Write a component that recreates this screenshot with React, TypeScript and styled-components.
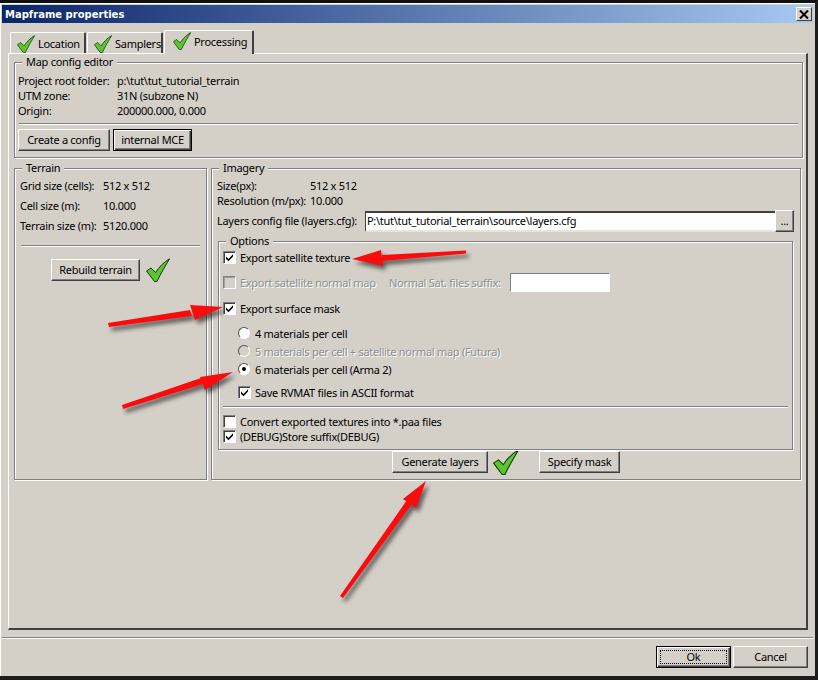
import React, { FC } from 'react';
import styled, { createGlobalStyle } from 'styled-components';

const GlobalStyle = createGlobalStyle`
  * { box-sizing: border-box; }
  html, body { margin: 0; padding: 0; background: #d4d0c8; }
  body {
    font-family: "Noto Sans", "DejaVu Sans", sans-serif;
    font-size: 11px;
    letter-spacing: -0.28px;
    color: #000;
  }
`

const GreenCheck: FC<{ size: number }> = ({ size }) => (
    <svg width={size} height={size} viewBox="0 0 24 24">
        <path d="M0.5 13 L5 10 L9.5 14.5 C13 9 18 4 23.5 0.8 C20 7 15 15 11 23.5 L8.5 23.5 Z"
              fill="#5cc52e" stroke="#0d3a0a" strokeWidth="1" strokeLinejoin="round" />
    </svg>
)

const Tick: FC = () => (
    <svg width="9" height="9" viewBox="0 0 9 9">
        <path d="M1 3.5 L3.5 6 L8 1.2 L8 3.6 L3.5 8.2 L1 5.8 Z" fill="#000" />
    </svg>
)

const Arrows: FC = () => (
    <ArrowLayer width="818" height="680" viewBox="0 0 818 680">
        <polygon points="466,250.5 466,253.5 382,261 382,255" />
        <polygon points="352,259 381,250 383,266" />
        <polygon points="108,323 109,327 192,316 190,310" />
        <polygon points="223,307 190,305 195,320" />
        <polygon points="122,405 123,409 203,384 201,378" />
        <polygon points="233,372 200,377 205,390" />
        <polygon points="340,596 343,598 412,504 407,500" />
        <polygon points="426,481 403,499 416,508" />
    </ArrowLayer>
)

const App: FC = () => {
    return (
        <Window>
            <GlobalStyle />
            <TitleBar>
                <TitleText>Mapframe properties</TitleText>
                <CloseButton>
                    <svg width="10" height="9" viewBox="0 0 10 9">
                        <path d="M1 0.5 L9 8.5 M9 0.5 L1 8.5" stroke="#000" strokeWidth="2" />
                    </svg>
                </CloseButton>
            </TitleBar>
            <Body>
                <TabRow>
                    <Tab $width={76}><GreenCheck size={18} /><span>Location</span></Tab>
                    <Tab $width={76}><GreenCheck size={18} /><span>Samplers</span></Tab>
                    <Tab $width={90} $active><GreenCheck size={18} /><span>Processing</span></Tab>
                </TabRow>
                <TabPanel>
                    <MapGroup>
                        <Legend>Map config editor</Legend>
                        <InfoRow $height={15} $pad={4}>
                            <Label $width={99}>Project root folder:</Label><span>p:\tut\tut_tutorial_terrain</span>
                        </InfoRow>
                        <InfoRow $height={15} $pad={4}>
                            <Label $width={99}>UTM zone:</Label><span>31N (subzone N)</span>
                        </InfoRow>
                        <InfoRow $height={15} $pad={4}>
                            <Label $width={99}>Origin:</Label><span>200000.000, 0.000</span>
                        </InfoRow>
                        <Separator $top={5} $side={4} />
                        <ButtonRow $top={4} $left={4}>
                            <Button $width={92}>Create a config</Button>
                            <Button $width={79} $default>internal MCE</Button>
                        </ButtonRow>
                    </MapGroup>
                    <Columns>
                        <TerrainGroup>
                            <Legend>Terrain</Legend>
                            <InfoRow $height={20} $pad={6}>
                                <Label $width={83}>Grid size (cells):</Label><span>512 x 512</span>
                            </InfoRow>
                            <InfoRow $height={20} $pad={6}>
                                <Label $width={83}>Cell size (m):</Label><span>10.000</span>
                            </InfoRow>
                            <InfoRow $height={20} $pad={6}>
                                <Label $width={83}>Terrain size (m):</Label><span>5120.000</span>
                            </InfoRow>
                            <Separator $top={10} $side={6} />
                            <ButtonRow $top={11} $left={37}>
                                <Button $width={89}>Rebuild terrain</Button>
                                <CheckSlot $left={3}><GreenCheck size={24} /></CheckSlot>
                            </ButtonRow>
                        </TerrainGroup>
                        <ImageryGroup>
                            <Legend>Imagery</Legend>
                            <InfoRow $height={15} $pad={6}>
                                <Label $width={93}>Size(px):</Label><span>512 x 512</span>
                            </InfoRow>
                            <InfoRow $height={15} $pad={6}>
                                <Label $width={93}>Resolution (m/px):</Label><span>10.000</span>
                            </InfoRow>
                            <LayersRow>
                                <LayersLabel $width={148}>Layers config file (layers.cfg):</LayersLabel>
                                <PathInput>P:\tut\tut_tutorial_terrain\source\layers.cfg</PathInput>
                                <Button $width={19}>...</Button>
                            </LayersRow>
                            <OptionsGroup>
                                <Legend>Options</Legend>
                                <OptionRow $top={0}>
                                    <CheckBox><Tick /></CheckBox>
                                    <span>Export satellite texture</span>
                                </OptionRow>
                                <OptionRow $top={9}>
                                    <CheckBox $disabled />
                                    <NormalLabel>Export satellite normal map</NormalLabel>
                                    <SuffixLabel>Normal Sat. files suffix:</SuffixLabel>
                                    <SuffixInput />
                                </OptionRow>
                                <OptionRow $top={10}>
                                    <CheckBox><Tick /></CheckBox>
                                    <span>Export surface mask</span>
                                </OptionRow>
                                <OptionRow $top={9} $indent={15}>
                                    <Radio />
                                    <span>4 materials per cell</span>
                                </OptionRow>
                                <OptionRow $top={2} $indent={15}>
                                    <Radio $disabled />
                                    <Dimmed>5 materials per cell + satellite normal map (Futura)</Dimmed>
                                </OptionRow>
                                <OptionRow $top={2} $indent={15}>
                                    <Radio $checked />
                                    <span>6 materials per cell (Arma 2)</span>
                                </OptionRow>
                                <OptionRow $top={7} $indent={15}>
                                    <CheckBox><Tick /></CheckBox>
                                    <span>Save RVMAT files in ASCII format</span>
                                </OptionRow>
                                <Separator $top={6} $side={4} />
                                <OptionRow $top={6} $height={15}>
                                    <CheckBox />
                                    <span>Convert exported textures into *.paa files</span>
                                </OptionRow>
                                <OptionRow $top={0} $height={15}>
                                    <CheckBox><Tick /></CheckBox>
                                    <span>(DEBUG)Store suffix(DEBUG)</span>
                                </OptionRow>
                            </OptionsGroup>
                            <ButtonRow $top={-1} $left={181}>
                                <Button $width={96}>Generate layers</Button>
                                <CheckSlot $left={2}><GreenCheck size={26} /></CheckSlot>
                                <CheckSlot $left={17}><Button $width={81}>Specify mask</Button></CheckSlot>
                            </ButtonRow>
                        </ImageryGroup>
                    </Columns>
                </TabPanel>
                <FooterLine />
                <Footer>
                    <Button $width={75} $default $focus>Ok</Button>
                    <Button $width={75}>Cancel</Button>
                </Footer>
            </Body>
            <Arrows />
        </Window>
    )
};

export default App;

let Window = styled.div`
  position: relative;
  width: 818px;
  height: 680px;
  background: #d4d0c8;
  border-top: 3px solid #101010;
  border-right: 3px solid #1c1c1c;
  border-bottom: 4px solid #1c1c1c;
  padding: 2px 2px 0 2px;
  box-shadow: inset 1px 1px 0 #fff;
  overflow: hidden;
`

let TitleBar = styled.div`
  display: flex;
  align-items: center;
  justify-content: space-between;
  height: 18px;
  padding: 0 1px 0 3px;
  background: linear-gradient(to right, #0a246a, #a6caf0);
`

let TitleText = styled.div`
  color: #fff;
  font-family: "DejaVu Sans", sans-serif;
  font-weight: bold;
  font-size: 10px;
  letter-spacing: 0;
`

let CloseButton = styled.div`
  display: flex;
  align-items: center;
  justify-content: center;
  width: 16px;
  height: 14px;
  background: #d4d0c8;
  border: 1px solid;
  border-color: #fff #404040 #404040 #fff;
`

let Body = styled.div`
  display: flex;
  flex-direction: column;
  padding: 7px 5px 0 6px;
`

let TabRow = styled.div`
  display: flex;
  align-items: flex-end;
  gap: 1px;
  height: 23px;
  padding-left: 2px;
`

let Tab = styled.div<{ $width: number; $active?: boolean }>`
  position: relative;
  z-index: ${p => (p.$active ? 2 : 1)};
  display: flex;
  align-items: center;
  gap: 3px;
  width: ${p => p.$width}px;
  height: ${p => (p.$active ? 24 : 21)}px;
  margin-bottom: ${p => (p.$active ? -1 : 0)}px;
  padding: 1px 0 ${p => (p.$active ? 4 : 0)}px ${p => (p.$active ? 8 : 6)}px;
  background: #d4d0c8;
  border: 1px solid #fff;
  border-bottom: none;
  border-right: 2px solid #404040;
  border-radius: 2px 2px 0 0;
`

let TabPanel = styled.div`
  display: flex;
  flex-direction: column;
  gap: 10px;
  height: 577px;
  padding: 8px 3px 0 5px;
  border: 1px solid;
  border-color: #fff #404040 #404040 #fff;
  border-width: 1px 2px 2px 1px;
`

let Group = styled.div`
  position: relative;
  border: 1px solid #808080;
  box-shadow: inset 1px 1px 0 #fff, 1px 1px 0 #fff;
`

let MapGroup = styled(Group)`
  height: 96px;
  padding-top: 10px;
`

let Columns = styled.div`
  display: grid;
  grid-template-columns: 193px 590px;
  gap: 4px;
  height: 312px;
`

let TerrainGroup = styled(Group)`
  padding-top: 6px;
`

let ImageryGroup = styled(Group)`
  padding-top: 9px;
`

let OptionsGroup = styled(Group)`
  height: 209px;
  margin: 9px 7px 0 6px;
  padding: 7px 0 0 0;
`

let Legend = styled.div`
  position: absolute;
  top: -8px;
  left: 7px;
  padding: 0 4px;
  background: #d4d0c8;
  line-height: 13px;
`

let InfoRow = styled.div<{ $height: number; $pad: number }>`
  display: flex;
  align-items: center;
  height: ${p => p.$height}px;
  padding-left: ${p => p.$pad - 1}px;
  white-space: nowrap;
`

let Label = styled.div<{ $width: number }>`
  flex: none;
  width: ${p => p.$width}px;
`

let LayersLabel = styled(Label)`
  padding-bottom: 2px;
`

let Separator = styled.div<{ $top: number; $side: number }>`
  height: 2px;
  margin: ${p => p.$top}px ${p => p.$side}px 0;
  border-top: 1px solid #808080;
  border-bottom: 1px solid #fff;
`

let ButtonRow = styled.div<{ $top: number; $left: number }>`
  display: flex;
  align-items: center;
  gap: 3px;
  margin-top: ${p => p.$top}px;
  padding-left: ${p => p.$left - 1}px;
`

let CheckSlot = styled.div<{ $left: number }>`
  display: flex;
  margin-left: ${p => p.$left}px;
`

let Button = styled.div<{ $width: number; $default?: boolean; $focus?: boolean }>`
  position: relative;
  flex: none;
  display: flex;
  align-items: center;
  justify-content: center;
  width: ${p => p.$width}px;
  height: 22px;
  padding-bottom: 2px;
  background: #d4d0c8;
  border: 1px solid;
  border-color: ${p => (p.$default ? '#000' : '#fff #404040 #404040 #fff')};
  box-shadow: ${p => (p.$default
    ? 'inset 1px 1px 0 #fff, inset -1px -1px 0 #404040, inset -2px -2px 0 #808080'
    : 'inset -1px -1px 0 #808080')};
  outline: ${p => (p.$focus ? '1px dotted #000' : 'none')};
  outline-offset: -5px;
`

let LayersRow = styled.div`
  display: flex;
  align-items: center;
  height: 22px;
  margin-top: 2px;
  padding-left: 5px;
`

let PathInput = styled.div`
  display: flex;
  align-items: center;
  width: 410px;
  height: 21px;
  padding: 0 0 1px 1px;
  background: #fff;
  border: 2px solid;
  border-color: #404040 #fff #e8e4dc #404040;
  border-right-width: 0;
  border-left-width: 1px;
  white-space: nowrap;
`

let OptionRow = styled.div<{ $top: number; $height?: number; $indent?: number }>`
  display: flex;
  align-items: center;
  gap: 4px;
  height: ${p => p.$height ?? 16}px;
  margin-top: ${p => p.$top}px;
  padding-left: ${p => 4 + (p.$indent ?? 0)}px;
  white-space: nowrap;
`

let CheckBox = styled.div<{ $disabled?: boolean }>`
  flex: none;
  display: flex;
  align-items: center;
  justify-content: center;
  width: 13px;
  height: 13px;
  background: ${p => (p.$disabled ? '#d4d0c8' : '#fff')};
  border: 1px solid;
  border-color: #808080 #fff #fff #808080;
  box-shadow: inset 1px 1px 0 ${p => (p.$disabled ? '#a0a0a0' : '#404040')};
`

let Radio = styled.div<{ $checked?: boolean; $disabled?: boolean }>`
  flex: none;
  display: flex;
  align-items: center;
  justify-content: center;
  width: 12px;
  height: 12px;
  margin-right: 1px;
  border-radius: 50%;
  background: ${p => (p.$disabled ? '#d4d0c8' : '#fff')};
  border: 1px solid;
  border-color: #505050 #fff #fff #505050;

  &::after {
    content: "";
    display: ${p => (p.$checked ? 'block' : 'none')};
    width: 4px;
    height: 4px;
    border-radius: 50%;
    background: #000;
  }
`

let Dimmed = styled.span`
  color: #8f8f8f;
  text-shadow: 1px 1px 0 #fff;
`

let NormalLabel = styled(Dimmed)`
  flex: none;
  width: 145px;
`

let SuffixLabel = styled(Dimmed)`
  flex: none;
  width: 117px;
`

let SuffixInput = styled.div`
  width: 100px;
  height: 19px;
  background: #fff;
  border: 1px solid;
  border-color: #808080 #fff #fff #808080;
`

let FooterLine = styled.div`
  height: 2px;
  margin: 7px -5px 0 -6px;
  border-top: 1px solid #808080;
  border-bottom: 1px solid #fff;
`

let Footer = styled.div`
  display: flex;
  justify-content: flex-end;
  gap: 2px;
  margin-top: 7px;
`

let ArrowLayer = styled.svg`
  position: absolute;
  top: -3px;
  left: 0;
  pointer-events: none;
  filter: drop-shadow(3px 4px 2px rgba(0, 0, 0, 0.55));

  polygon {
    fill: #fb0b0b;
  }
`
